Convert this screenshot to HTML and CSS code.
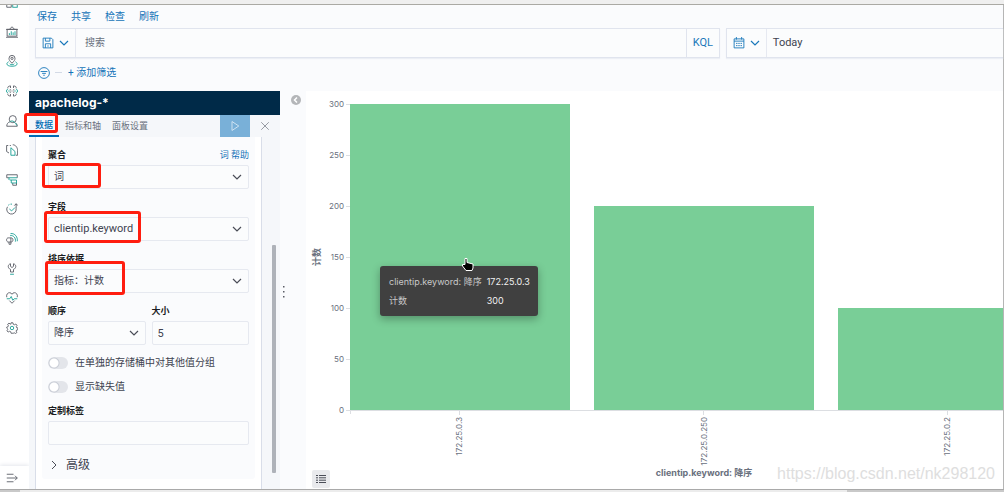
FILE: index.html
```html
<!DOCTYPE html>
<html lang="zh-CN">
<head>
<meta charset="utf-8">
<title>apachelog-*</title>
<link rel="stylesheet" href="styles.css">
</head>
<body>
<div class="window-top"></div>
<div class="app">
  <nav class="rail" aria-label="导航">
    <div class="rail-list">
      <a href="#" aria-label="概览"><svg class="ico" viewBox="0 0 16 16"><path d="M1 1h6v5H1zM9 1h6v5H9zM1 9h6v6H1z"/><rect class="g" x="9" y="9" width="6" height="6"/></svg></a>
      <a href="#" aria-label="画布"><svg class="ico" viewBox="0 0 16 16"><path d="M1.500 4.500h13v9h-13zM0 4.500h16M0 15h16M5 4l3-3 3 3"/><path class="g" d="M4.500 12V9.500M7 12V7M9.500 12V8.500M12 12V7"/></svg></a>
      <a href="#" aria-label="地图"><svg class="ico" viewBox="0 0 16 16"><path d="M8 11C5 8 4 6.500 4 4.500a4 4 0 0 1 8 0C12 6.500 11 8 8 11z"/><circle cx="8" cy="4.500" r="1.500"/><path class="g" d="M3.500 9C-.5 11 .5 15 8 15s8.500-4 4.500-6M5 11.500c0 2 6 2 6 0"/></svg></a>
      <a href="#" aria-label="机器学习"><svg class="ico" viewBox="0 0 16 16"><path d="M6 1.500C3.500 1 2 2.500 2.500 4.500M10 1.500c2.500-.5 4 1 3.500 3M6 14.500c-2.500.5-4-1-3.500-3M10 14.500c2.500.5 4-1 3.500-3M6 1v3M10 1v3M6 12v3M10 12v3M5 6l2 1M11 6L9 7M5 10l2-1M11 10L9 9"/><path class="g" d="M2.500 5.500C0 6 0 10 2.500 10.500M13.500 5.500c2.500.5 2.500 4.500 0 5M3 8h2M11 8h2"/></svg></a>
      <a href="#" aria-label="用户"><svg class="ico" viewBox="0 0 16 16"><path d="M5 9c-2.500 1-4 3-4 6h14c0-1.500-.5-3-1.500-4"/><circle cx="9" cy="5.500" r="4.700"/><path class="g" d="M5 9.500C7 7 11 7 14.500 14"/></svg></a>
      <a href="#" aria-label="日志"><svg class="ico" viewBox="0 0 16 16"><path d="M4 12L.8 10V2H3M5 2h1.500M9 1c4 0 6.500 4 6.500 8v6H13"/><path class="g" d="M6.500 5l5.500 5v5H6.500z"/></svg></a>
      <a href="#" aria-label="APM"><svg class="ico" viewBox="0 0 16 16"><path d="M1 1h14v4M1 1v4h3M9 12v3h5v-3"/><path class="g" d="M15 5H4v3M5 8h9v4H7V8"/></svg></a>
      <a href="#" aria-label="运行时间"><svg class="ico" viewBox="0 0 16 16"><path d="M2 5a6.300 6.300 0 1 0 11.500 2.500V1M11 3.500L13.500 1 16 3.500"/><path class="g" d="M4.500 8l3 2.500L12 6M3 3l1.500-1M6 1.500h2"/></svg></a>
      <a href="#" aria-label="安全"><svg class="ico" viewBox="0 0 16 16"><path d="M5 6.500H3C0 6.500 0 12 3 12h4c3 0 3-5.500 0-5.500H5zM4 12v3h2.500V6.500"/><path class="g" d="M5.500 3.500c4-1 8 3 7 8M6 .8c6-1 10 5 9 10.200"/></svg></a>
      <a href="#" aria-label="开发工具"><svg class="ico" viewBox="0 0 16 16"><path d="M6 1C2 2 2 7 6 8.500V12h4V8.500C14 7 14 2 10 1v3.500L8 6 6 4.500z"/><path class="g" d="M5.500 15h5"/></svg></a>
      <a href="#" aria-label="监测"><svg class="ico" viewBox="0 0 16 16"><path d="M1 7C-.5 1 6-1 8 3c2-4 8.500-2 7 4M4.500 11.500L8 15l3.500-3.500"/><path class="g" d="M1 9h4l2-3 2 5 2-2h4"/></svg></a>
      <a href="#" aria-label="管理"><svg class="ico" viewBox="0 0 16 16"><path d="M6.800 1h2.400l.5 2 1.600.7 1.800-1 1.600 1.700-1 1.800.6 1.500 1.700.3-.2 2.300-1.700.4-.6 1.500 1 1.700-1.700 1.500-1.700-1-1.500.6L9.200 15H6.800l-.5-2-1.600-.6-1.800 1-1.600-1.700 1-1.700-.6-1.500L1 8V6.800l1.500-.4.7-1.500-1-1.800 1.700-1.500 1.700 1L6.300 3z"/><circle class="g" cx="8" cy="8" r="2.300"/></svg></a>
    </div>
    <button class="rail-expand" aria-label="展开"><svg class="ico" viewBox="0 0 16 16"><path d="M1 3h9M1 8h14M1 13h9M12 5l3 3-3 3"/></svg></button>
  </nav>

  <main class="main">
    <header class="head">
      <nav class="menu"><a href="#">保存</a><a href="#">共享</a><a href="#">检查</a><a href="#">刷新</a></nav>
      <div class="query">
        <div class="search">
          <button class="pick" aria-label="已保存查询">
            <svg class="ico blue" viewBox="0 0 16 16"><path d="M1.500 1.500h11l2 2v11h-13zM4.500 1.500v4h6v-4M4.500 14.500V9h7v5.500M8 11v2"/></svg>
            <svg class="chev blue" viewBox="0 0 10 6"><path d="M1 1l4 4 4-4"/></svg>
          </button>
          <input class="search-box" type="text" placeholder="搜索" aria-label="搜索">
          <button class="kql">KQL</button>
        </div>
        <div class="dates">
          <button class="pick" aria-label="日期">
            <svg class="ico blue" viewBox="0 0 16 16"><path d="M1.500 2.500h13v12h-13zM1.500 5.500h13M4.500 0v3.500M11.500 0v3.500M4 8.500h2M7 8.500h2M10 8.500h2M4 11.500h2M7 11.500h2M10 11.500h2"/></svg>
            <svg class="chev blue" viewBox="0 0 10 6"><path d="M1 1l4 4 4-4"/></svg>
          </button>
          <button class="today">Today</button>
        </div>
      </div>
      <div class="filters">
        <button class="plain" aria-label="筛选"><svg class="ico blue" viewBox="0 0 16 16"><circle cx="8" cy="8" r="7.200"/><path d="M3.500 6h9M5.500 8.500h5M7 11h2"/></svg></button>
        <span class="dash"></span>
        <a href="#">+ 添加筛选</a>
      </div>
    </header>

    <div class="work">
      <section class="editor">
        <h1 class="title">apachelog-*</h1>
        <div class="tabs">
          <button class="tab tab-on">数据<span class="mark mark-tab"></span></button>
          <button class="tab">指标和轴</button>
          <button class="tab">面板设置</button>
          <button class="play" aria-label="应用"><svg class="ico" viewBox="0 0 16 16"><path d="M4 2l9 6-9 6z"/></svg></button>
          <button class="close" aria-label="关闭"><svg class="ico" viewBox="0 0 16 16"><path d="M3 3l10 10M13 3L3 13"/></svg></button>
        </div>
        <div class="pane">
          <div class="sheet">
            <form class="form">
              <div class="field">
                <div class="label-row"><label for="agg">聚合</label><a href="#">词 帮助</a></div>
                <div class="control"><select id="agg"><option>词</option></select><svg class="chev" viewBox="0 0 10 6"><path d="M1 1l4 4 4-4"/></svg><span class="mark mark-agg"></span></div>
              </div>
              <div class="field">
                <div class="label-row"><label for="fld">字段</label></div>
                <div class="control"><select id="fld"><option>clientip.keyword</option></select><svg class="chev" viewBox="0 0 10 6"><path d="M1 1l4 4 4-4"/></svg><span class="mark mark-field"></span></div>
              </div>
              <div class="field">
                <div class="label-row"><label for="by">排序依据</label></div>
                <div class="control"><select id="by"><option>指标：计数</option></select><svg class="chev" viewBox="0 0 10 6"><path d="M1 1l4 4 4-4"/></svg><span class="mark mark-order"></span></div>
              </div>
              <div class="pair">
                <div class="field">
                  <div class="label-row"><label for="dir">顺序</label></div>
                  <div class="control"><select id="dir"><option>降序</option></select><svg class="chev" viewBox="0 0 10 6"><path d="M1 1l4 4 4-4"/></svg></div>
                </div>
                <div class="field">
                  <div class="label-row"><label for="size">大小</label></div>
                  <div class="control"><input id="size" type="text" value="5"></div>
                </div>
              </div>
              <div class="toggles">
                <label class="toggle"><input type="checkbox" role="switch">在单独的存储桶中对其他值分组</label>
                <label class="toggle"><input type="checkbox" role="switch">显示缺失值</label>
              </div>
              <div class="field field-custom">
                <div class="label-row"><label for="custom">定制标签</label></div>
                <div class="control"><input id="custom" type="text"></div>
              </div>
              <button class="advanced" type="button"><svg class="arrow" viewBox="0 0 6 10"><path d="M1 1l4 4-4 4"/></svg>高级</button>
            </form>
          </div>
          <div class="gutter"><div class="thumb"></div></div>
        </div>
      </section>

      <div class="divider">
        <button class="plain collapse" aria-label="折叠"><svg viewBox="0 0 10 10"><circle cx="5" cy="5" r="5"/><path d="M6 2.500L3.500 5 6 7.500"/></svg></button>
        <svg class="grip" viewBox="0 0 2 12"><path d="M0 0h1.500v1.500H0zM0 5h1.500v1.500H0zM0 10h1.500v1.500H0z"/></svg>
      </div>

      <section class="viz">
        <svg class="chart" role="img" aria-label="计数">
          <path class="axis" d="M44.500 13v310M40 319.500h712M40 13.500h4M40 64.500h4M40 115.500h4M40 166.500h4M40 217.500h4M40 268.500h4M153.500 319v5M397.500 319v5M641.500 319v5"/>
          <g class="bars"><rect x="44" y="13" width="220" height="306"/><rect x="288" y="115" width="220" height="204"/><rect x="532" y="217" width="220" height="102"/></g>
          <g class="ticks">
            <text x="38" y="16">300</text><text x="38" y="67">250</text><text x="38" y="118">200</text><text x="38" y="169">150</text><text x="38" y="220">100</text><text x="38" y="271">50</text><text x="38" y="322">0</text>
            <text transform="translate(156 326) rotate(-90)">172.25.0.3</text>
            <text transform="translate(401 326) rotate(-90)">172.25.0.250</text>
            <text transform="translate(644 326) rotate(-90)">172.25.0.2</text>
          </g>
          <g class="names"><text transform="translate(14 166) rotate(-90)">计数</text><text x="398" y="385">clientip.keyword: 降序</text></g>
        </svg>
        <button class="legend" aria-label="图例"><svg viewBox="0 0 10 8"><path d="M0 .5h2M3 .5h7M0 2.800h2M3 2.800h7M0 5.200h2M3 5.200h7M0 7.500h2M3 7.500h7"/></svg></button>
        <dl class="tip"><dt>clientip.keyword: 降序</dt><dd>172.25.0.3</dd><dt>计数</dt><dd>300</dd></dl>
        <svg class="hand" viewBox="0 0 12 13"><path d="M3 .5h2v4l6 1.500v4l-1 2.500H4L.5 8V6.500H3z"/></svg>
        <span class="credit">https://blog.csdn.net/nk298120</span>
      </section>
    </div>
  </main>
</div>
<div class="window-bottom"><div class="window-thumb"></div></div>
</body>
</html>
```
FILE: styles.css
```css
* { box-sizing: border-box; }
body {
  margin: 0;
  height: 100vh;
  display: flex;
  flex-direction: column;
  overflow: hidden;
  background: #fff;
  color: #404350;
  font: 11px/16px Roboto, "Noto Sans CJK SC", sans-serif;
}
button, input, select { font: inherit; color: inherit; margin: 0; padding: 0; border: 0; border-radius: 0; background: none; }
a { color: #1473b8; text-decoration: none; }
svg { display: block; fill: none; flex: none; }
.ico { width: 12px; height: 12px; stroke: #5a5d66; stroke-width: 1.2; }
.ico .g { stroke: #1a9f94; }
.chev { width: 10px; height: 6px; stroke: #4a4d57; stroke-width: 1.2; }
.ico.blue, .chev.blue { stroke: #1a78ba; }
.plain { display: block; }

.window-top { height: 5px; background: #efefef; border-bottom: 1px solid #aaa9a4; }
.window-bottom { height: 3px; padding-left: 20px; background: #c9c9c9; border-top: 1px solid #a9a9a9; }
.window-thumb { width: 84%; height: 2px; background: #ececec; }
.app { flex: 1; min-height: 0; display: flex; border-right: 1px solid #b5b5b5; }

.rail { width: 29px; display: flex; flex-direction: column; justify-content: space-between; overflow: hidden; }
.rail-list { height: 338px; margin-top: -9px; padding-left: 6px; display: flex; flex-direction: column; justify-content: space-between; }
.rail-expand { height: 23px; padding-left: 6px; box-shadow: 0 -1px 4px #e4e6ec; }

.main { flex: 1; min-width: 0; display: flex; flex-direction: column; }
.head { background: #fafbfd; }
.menu { height: 23px; padding-left: 8px; display: flex; align-items: center; gap: 14px; font-size: 10px; }
.query { display: flex; gap: 6px; padding-left: 6px; }
.search, .dates { display: flex; height: 30px; border: 1px solid #e0e4ee; background: #fbfcfd; box-shadow: 0 1px 1px #eceff5; }
.search { flex: 685; }
.dates { flex: 277; border-right: 0; }
.pick { width: 40px; display: flex; align-items: center; justify-content: center; gap: 5px; border-right: 1px solid #e6e9f1; }
.search-box { flex: 1; min-width: 0; padding-left: 9px; font-size: 10px; outline: 0; }
.search-box::placeholder { color: #69707d; opacity: 1; }
.kql { width: 33px; color: #1a78ba; border-left: 1px solid #e0e4ee; }
.today { padding-left: 6px; }
.filters { height: 33px; padding: 0 0 4px 9px; display: flex; align-items: center; font-size: 10px; }
.dash { width: 7px; margin: 0 6px 0 5px; border-top: 1px solid #d3dae6; }

.work { flex: 1; min-height: 0; display: flex; }
.editor { width: 251px; display: flex; flex-direction: column; background: #f5f7fa; }
.title { margin: 0; padding-left: 6px; background: #002a48; color: #fff; font-family: Inter, sans-serif; font-size: 12px; line-height: 24px; font-weight: 700; }
.tabs { display: flex; height: 22px; font-size: 9px; color: #69707d; }
.tab { position: relative; padding: 0 6px; }
.tab + .tab { margin-right: -1px; }
.tab-on { color: #006bb4; font-weight: 500; border-bottom: 2px solid #006bb4; }
.play { width: 30px; margin-left: auto; display: flex; align-items: center; justify-content: center; background: #79b0d8; }
.play .ico { stroke: #d6e8f5; }
.close { width: 30px; display: flex; align-items: center; justify-content: center; }
.close .ico { stroke: #8c9099; }
.pane { flex: 1; min-height: 0; display: flex; padding-left: 6px; }
.sheet { flex: 1; padding: 0 6px 10px; background: #fff; border: solid #d9dee9; border-width: 0 1px; }
.gutter { width: 18px; padding: 108px 4px 16px 10px; }
.thumb { height: 100%; background: #aeb2b9; border-radius: 1px; }
.form { height: 100%; padding: 10px 6px 0; display: flex; flex-direction: column; gap: 10px; background: #fafbfd; border-radius: 0 0 3px 3px; }
.field { display: flex; flex-direction: column; gap: 2px; }
.label-row { display: flex; justify-content: space-between; font-size: 9px; }
.label-row label { font-weight: 700; color: #1a1c21; }
.control { position: relative; }
.control select, .control input { display: block; width: 100%; height: 24px; padding: 0 5px; border: 1px solid #e6e9f0; background: #fbfcfd; appearance: none; border-radius: 2px; }
.control .chev { position: absolute; right: 7px; top: 9px; pointer-events: none; }
#agg, #by, #dir { font-size: 10px; }
.pair { display: grid; grid-template-columns: 1fr 1fr; gap: 6px; }
.toggles { display: flex; flex-direction: column; gap: 8px; font-size: 10px; }
.toggle { display: flex; align-items: center; gap: 7px; }
.toggle input { appearance: none; width: 20px; height: 12px; border-radius: 6px; background: radial-gradient(circle at 6px 6px, #fff 4px, #c9cdd6 5px, #e3e5ea 6px); }
.field-custom { margin-top: -2px; }
.advanced { display: flex; align-items: center; gap: 9px; padding-left: 3px; margin-top: 2px; font-size: 12px; }
.arrow { width: 6px; height: 10px; stroke: #4a4d57; }

.mark { position: absolute; border: 3px solid #ff1d0f; border-radius: 3px; pointer-events: none; }
.mark-tab { left: -5px; top: -2px; width: 34px; height: 20px; }
.mark-agg { left: -6px; top: -2px; width: 59px; height: 25px; }
.mark-field { left: -4px; top: -6px; width: 97px; height: 32px; }
.mark-order { left: -3px; top: -8px; width: 80px; height: 34px; }

.divider { width: 26px; position: relative; background: #fafbfd; }
.collapse { margin: 4px 0 0 11px; }
.collapse svg { width: 10px; height: 10px; fill: #b4b6b9; }
.collapse path { stroke: #fff; fill: none; stroke-width: 1.5; }
.grip { position: absolute; left: 3px; top: 49%; width: 2px; height: 12px; fill: #5a5d66; }

.viz { flex: 1; min-width: 0; position: relative; background: #fff; font-family: Inter, "Noto Sans CJK SC", sans-serif; }
.chart { width: 100%; height: 100%; }
.bars { fill: #79ce97; }
.axis { stroke: #dcdee2; }
.ticks { font-size: 8px; fill: #69707d; text-anchor: end; }
.names { font-size: 9px; font-weight: 700; fill: #69707d; text-anchor: middle; }
.legend { position: absolute; left: 6px; bottom: 1px; width: 18px; height: 18px; padding: 5px 4px; background: #e9eaed; border-radius: 2px; }
.legend svg { width: 10px; height: 8px; stroke: #4a4d57; }
.tip { position: absolute; left: 74px; top: 175px; margin: 0; padding: 8px 8px 7px 9px; display: grid; grid-template-columns: auto auto; gap: 3px 5px; background: #404040; color: #c8c8c8; font-size: 9px; border-radius: 3px; box-shadow: 0 3px 8px #0000004d; }
.tip dd { margin: 0; color: #f0f0f0; }
.hand { position: absolute; left: 156px; top: 167px; width: 12px; height: 13px; fill: #000; stroke: #fff; }
.credit { position: absolute; right: 8px; bottom: 5px; color: #dedede; font: 16px/20px "Liberation Sans", sans-serif; }
```
